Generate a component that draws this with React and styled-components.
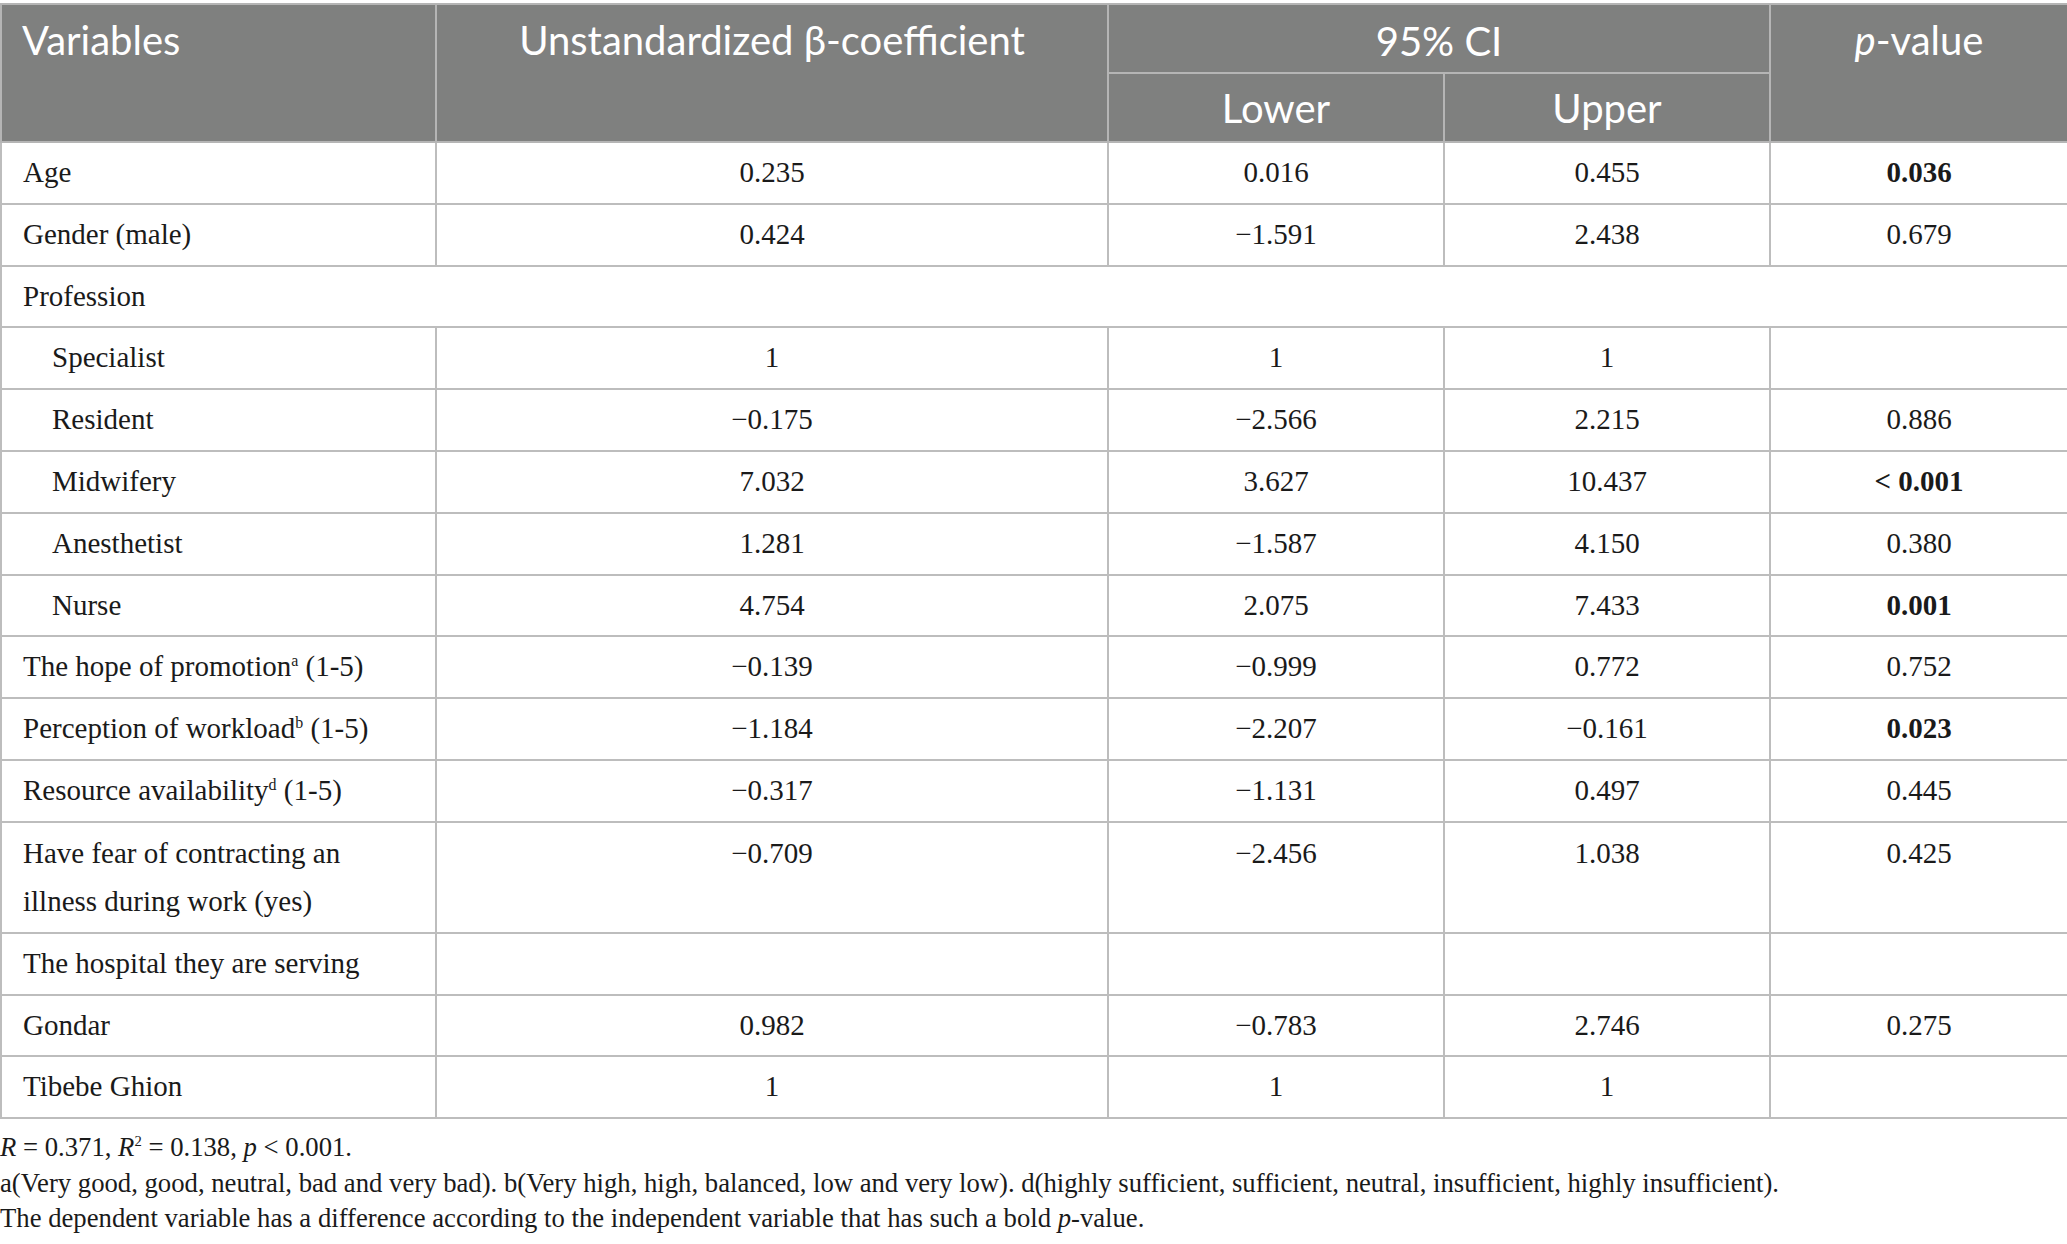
import React from 'react'
import styled, { createGlobalStyle } from 'styled-components'

const rows = [
    { label: 'Age', b: '0.235', lo: '0.016', hi: '0.455', p: '0.036', bold: true },
    { label: 'Gender (male)', b: '0.424', lo: '−1.591', hi: '2.438', p: '0.679' },
    { label: 'Profession', group: true },
    { label: 'Specialist', sub: true, b: '1', lo: '1', hi: '1', p: '' },
    { label: 'Resident', sub: true, b: '−0.175', lo: '−2.566', hi: '2.215', p: '0.886' },
    { label: 'Midwifery', sub: true, b: '7.032', lo: '3.627', hi: '10.437', p: '< 0.001', bold: true },
    { label: 'Anesthetist', sub: true, b: '1.281', lo: '−1.587', hi: '4.150', p: '0.380' },
    { label: 'Nurse', sub: true, b: '4.754', lo: '2.075', hi: '7.433', p: '0.001', bold: true },
    { label: 'The hope of promotion', sup: 'a', tail: ' (1-5)', b: '−0.139', lo: '−0.999', hi: '0.772', p: '0.752' },
    { label: 'Perception of workload', sup: 'b', tail: ' (1-5)', b: '−1.184', lo: '−2.207', hi: '−0.161', p: '0.023', bold: true },
    { label: 'Resource availability', sup: 'd', tail: ' (1-5)', b: '−0.317', lo: '−1.131', hi: '0.497', p: '0.445' },
    { label: 'Have fear of contracting an', tail2: 'illness during work (yes)', b: '−0.709', lo: '−2.456', hi: '1.038', p: '0.425', top: true },
    { label: 'The hospital they are serving', b: '', lo: '', hi: '', p: '' },
    { label: 'Gondar', b: '0.982', lo: '−0.783', hi: '2.746', p: '0.275' },
    { label: 'Tibebe Ghion', b: '1', lo: '1', hi: '1', p: '' },
]

function App() {
    return (
        <Page>
            <GlobalStyle />
            <Table>
                <colgroup>
                    <col style={{ width: 435 }} />
                    <col style={{ width: 672 }} />
                    <col style={{ width: 336 }} />
                    <col style={{ width: 326 }} />
                    <col style={{ width: 298 }} />
                </colgroup>
                <thead>
                    <tr>
                        <HeadCell rowSpan={2} left spanned>Variables</HeadCell>
                        <HeadCell rowSpan={2} spanned>Unstandardized β-coefficient</HeadCell>
                        <HeadCell colSpan={2} group>95% CI</HeadCell>
                        <HeadCell rowSpan={2} spanned><i>p</i>-value</HeadCell>
                    </tr>
                    <tr>
                        <HeadCell>Lower</HeadCell>
                        <HeadCell>Upper</HeadCell>
                    </tr>
                </thead>
                <tbody>
                    {rows.map(r => r.group ? (
                        <tr key={r.label}>
                            <LabelCell colSpan={5}>{r.label}</LabelCell>
                        </tr>
                    ) : (
                        <tr key={r.label}>
                            <LabelCell sub={r.sub} wrap={r.top}>
                                {r.label}{r.sup && <Sup>{r.sup}</Sup>}{r.tail}
                                {r.tail2 && <><br />{r.tail2}</>}
                            </LabelCell>
                            <ValueCell top={r.top}>{r.b}</ValueCell>
                            <ValueCell top={r.top}>{r.lo}</ValueCell>
                            <ValueCell top={r.top}>{r.hi}</ValueCell>
                            <ValueCell top={r.top} bold={r.bold}>{r.p}</ValueCell>
                        </tr>
                    ))}
                </tbody>
            </Table>
            <Notes>
                <p><i>R</i> = 0.371, <i>R</i><Sup>2</Sup> = 0.138, <i>p</i> &lt; 0.001.</p>
                <p>a(Very good, good, neutral, bad and very bad). b(Very high, high, balanced, low and very low). d(highly sufficient, sufficient, neutral, insufficient, highly insufficient).</p>
                <p>The dependent variable has a difference according to the independent variable that has such a bold <i>p</i>-value.</p>
            </Notes>
        </Page>
    )
}

export default App

const GlobalStyle = createGlobalStyle`
    body {
        margin: 0;
        background: #fff;
    }
`
const Page = styled.div`
    width: 2067px;
    padding-top: 3px;
`
const Table = styled.table`
    width: 2067px;
    border-collapse: collapse;
    table-layout: fixed;
`
const HeadCell = styled.th`
    background-color: #7f807f;
    color: #fff;
    font-family: Lato, "Open Sans", sans-serif;
    font-weight: 400;
    font-size: 40px;
    height: 67px;
    padding: ${props => props.spanned ? '2px 20px 0' : '0 20px'};
    border: 2px solid #b5b5b5;
    text-align: ${props => props.left ? 'left' : 'center'};
    vertical-align: ${props => props.spanned ? 'top' : props.group ? 'bottom' : 'middle'};
    line-height: ${props => props.group ? '61px' : '66px'};
    i {
        font-style: italic;
    }
`
const LabelCell = styled.td`
    font-family: "Liberation Serif", serif;
    font-size: 29px;
    color: #1a1a1a;
    line-height: ${props => props.wrap ? '48.5px' : '47.8px'};
    padding: 6px 12px 6px ${props => props.sub ? '50px' : '21px'};
    border: 2px solid #bdbdbd;
    vertical-align: middle;
    white-space: nowrap;
`
const ValueCell = styled.td`
    font-family: "Liberation Serif", serif;
    font-size: 29px;
    color: #1a1a1a;
    font-weight: ${props => props.bold ? 700 : 400};
    line-height: 47.8px;
    padding: ${props => props.top ? '7px 10px' : '6px 10px'};
    border: 2px solid #bdbdbd;
    text-align: center;
    vertical-align: ${props => props.top ? 'top' : 'middle'};
`
const Sup = styled.sup`
    font-size: 0.55em;
    vertical-align: 0.65em;
    line-height: 0;
`
const Notes = styled.div`
    font-family: "Liberation Serif", serif;
    font-size: 26.7px;
    color: #1a1a1a;
    line-height: 35.5px;
    padding-top: 11px;
    p {
        margin: 0;
    }
`
